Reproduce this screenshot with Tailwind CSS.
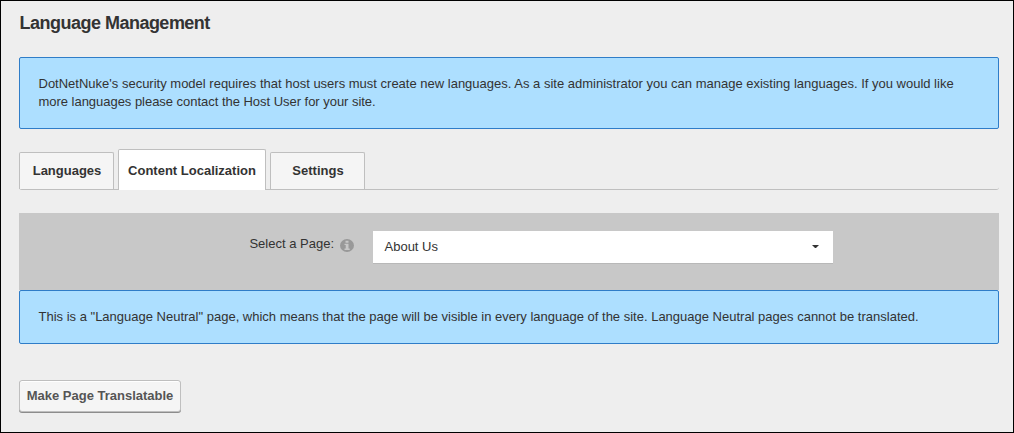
<!DOCTYPE html>
<html lang="en">
<head>
<meta charset="utf-8">
<title>Language Management</title>
<script src="https://cdn.jsdelivr.net/npm/@tailwindcss/browser@4"></script>
</head>
<body class="h-[433px] w-[1014px] overflow-hidden border border-black bg-[#eee] px-[18px] font-['Liberation_Sans',Arial,sans-serif] text-[13px] leading-[18px] text-[#333]">
  <h1 class="pt-[10px] pl-[0.5px] text-[18px] leading-6 font-bold tracking-[-0.51px]">Language Management</h1>
  <div class="mt-[22px] h-[72px] w-[980px] rounded-[2px] border border-[#2f7dc8] bg-[#addfff] px-[18.5px] pt-[17px] whitespace-nowrap">
    <p>DotNetNuke's security model requires that host users must create new languages. As a site administrator you can manage existing languages. If you would like</p>
    <p class="tracking-[-0.03px]">more languages please contact the Host User for your site.</p>
  </div>
  <div role="tablist" class="mt-5 flex h-[41px] w-[980px] items-end gap-1 rounded-b-[3px] border-b border-[#bfbfbf] font-bold whitespace-nowrap">
    <button role="tab" class="h-[37px] w-[95px] rounded-t-[2px] border border-b-0 border-[#bfbfbf] bg-[#f5f5f5] pl-px">Languages</button>
    <button role="tab" aria-selected="true" class="-mb-px h-[41px] w-[148px] rounded-t-[2px] border border-b-0 border-[#bfbfbf] bg-white pt-0.5">Content Localization</button>
    <button role="tab" class="h-[37px] w-[95px] rounded-t-[2px] border border-b-0 border-[#bfbfbf] bg-[#f5f5f5] pl-px">Settings</button>
  </div>
  <div class="mt-[23px] flex h-[77px] w-[980px] items-start bg-[#c8c8c8]">
    <div class="flex w-[354px] items-center justify-end pt-[22px] pr-[19px]">
      <label class="mr-[6px]">Select a Page:</label>
      <svg class="mt-[3px] h-[14px] w-[14px]" viewBox="0 0 14 14"><ellipse cx="7" cy="6.5" rx="7" ry="6.5" fill="#999"/><path d="M5.5 1.8h3v2h-3zM4.5 4.7h4v4.7h1.2v1.5H4.5V9.4h1.2V6.1H4.5z" fill="#c8c8c8"/></svg>
    </div>
    <div class="mt-[18px] flex h-8 w-[460px] items-center justify-between bg-white pr-[14px] pl-[11.5px] shadow-[0_1px_0_#b8b8b8]">
      <span>About Us</span>
      <svg class="-mt-px h-[3px] w-[7px]" viewBox="0 0 7 3"><path d="M0 0h7L4 3H3z" fill="#333"/></svg>
    </div>
  </div>
  <div class="h-[54px] w-[980px] rounded-[2px] border border-[#2f7dc8] bg-[#addfff] px-[18.5px] pt-[17px] whitespace-nowrap">
    <p>This is a "Language Neutral" page, which means that the page will be visible in every language of the site. Language Neutral pages cannot be translated.</p>
  </div>
  <button class="mt-9 block h-8 w-[162px] rounded-[3px] border border-[#bfbfbf] bg-[#f5f5f5] text-center font-bold whitespace-nowrap text-[#555] shadow-[0_1px_0_#8c8c8c,inset_0_1px_0_#fff]">Make Page Translatable</button>
</body>
</html>
